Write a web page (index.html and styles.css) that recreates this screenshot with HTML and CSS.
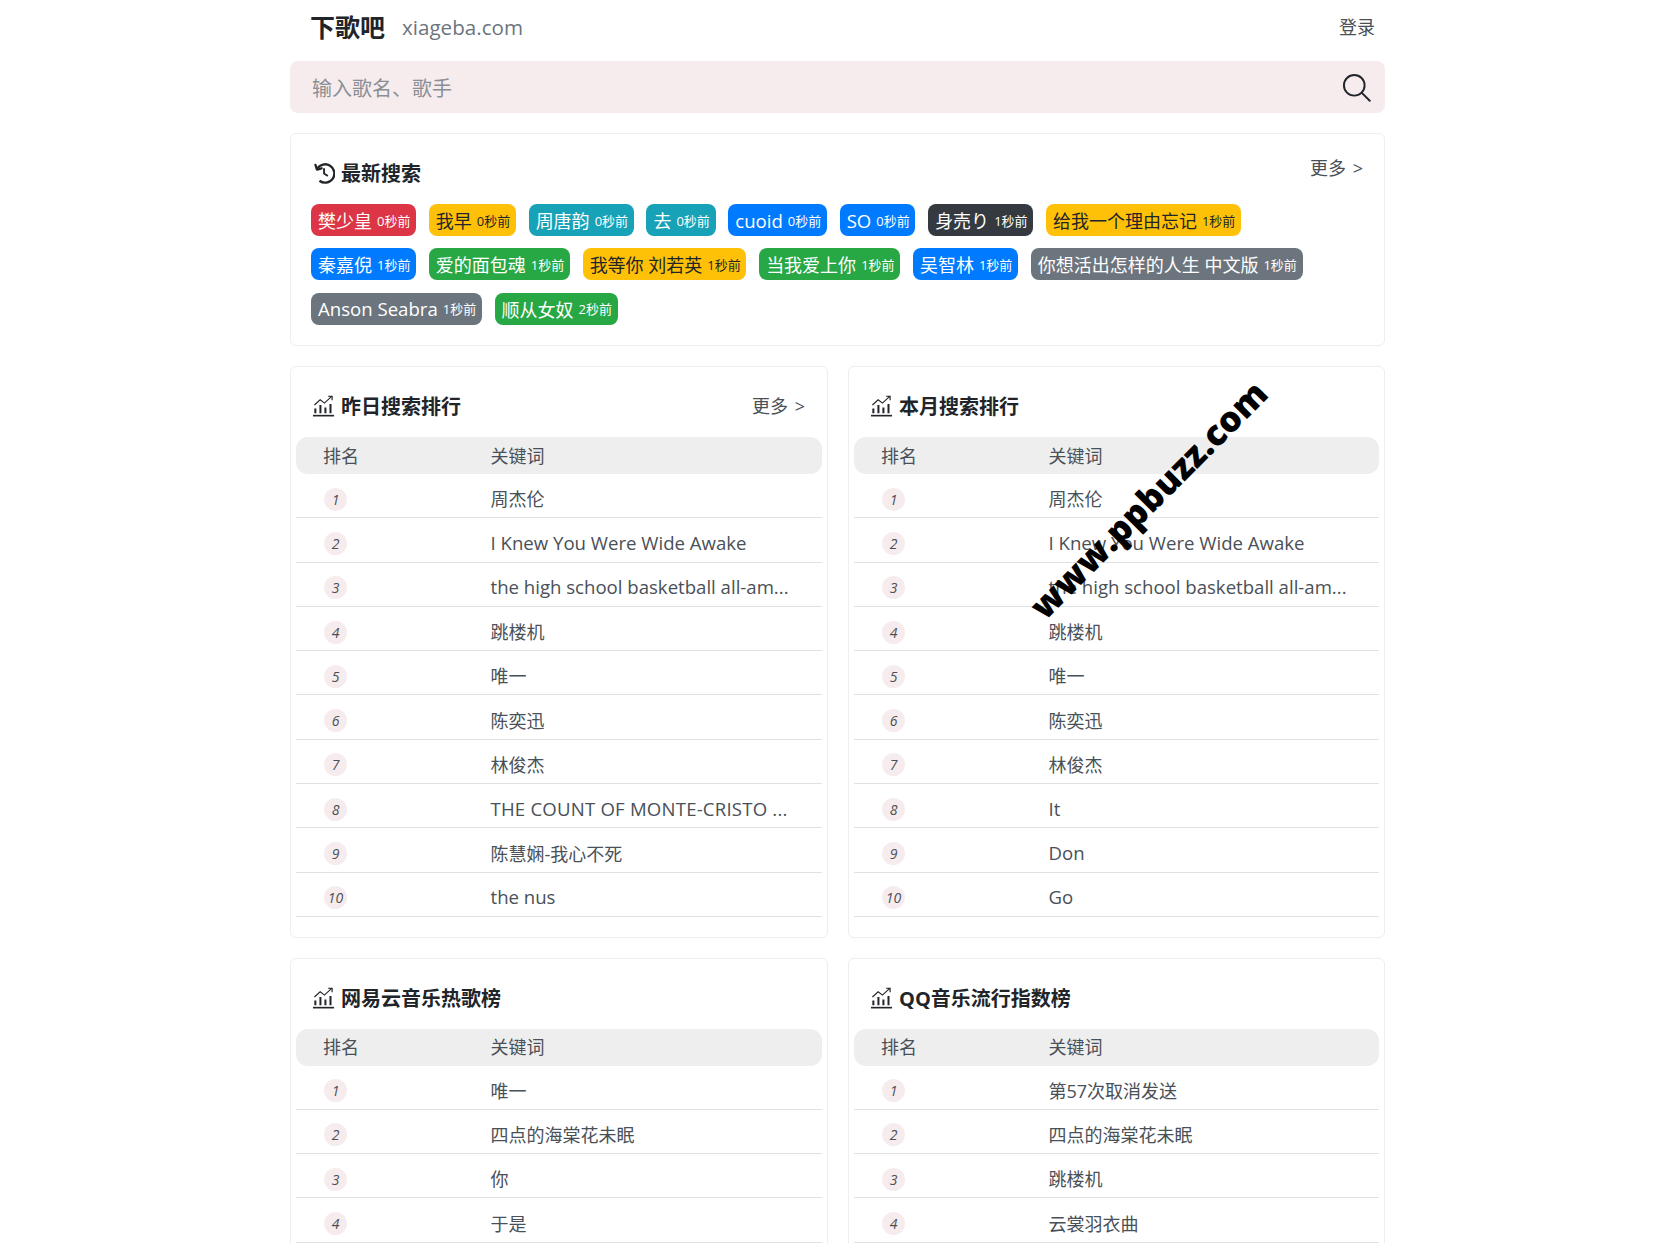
FILE: index.html
```html
<!DOCTYPE html>
<html lang="zh">
<head>
<meta charset="utf-8">
<title>下歌吧</title>
<link rel="stylesheet" href="styles.css">
</head>
<body>
<div class="page">
  <header class="topbar">
    <div class="brand"><strong>下歌吧</strong><span class="domain">xiageba.com</span></div>
    <a class="login">登录</a>
  </header>

  <div class="search">
    <span class="placeholder">输入歌名、歌手</span>
    <svg class="search-icon" viewBox="0 0 30 30" fill="none" stroke="#212529" stroke-width="2"><circle cx="12.7" cy="12.7" r="10.7"/><path d="M20.5 20.5 L28.7 28.7" stroke-linecap="round"/></svg>
  </div>

  <section class="card latest">
    <div class="card-head">
      <h2 class="title"><svg class="icon" viewBox="0 0 24 24" fill="none" stroke="#212529" stroke-width="2.4"><path d="M3.6 4 L5.2 9 L10 7.6" stroke-linecap="round" stroke-linejoin="round"/><path d="M5.4 8.2 A9.6 9.6 0 1 1 7.8 20.6"/><path d="M12.6 7.5 V13 L16.5 15.6" stroke-width="2"/></svg>最新搜索</h2>
      <a class="more">更多 &gt;</a>
    </div>
    <div class="tags">
      <a class="tag red">樊少皇<small>0秒前</small></a>
      <a class="tag yellow">我早<small>0秒前</small></a>
      <a class="tag teal">周唐韵<small>0秒前</small></a>
      <a class="tag teal">去<small>0秒前</small></a>
      <a class="tag blue"><span class="en">cuoid</span><small>0秒前</small></a>
      <a class="tag blue"><span class="en">SO</span><small>0秒前</small></a>
      <a class="tag dark">身売り<small>1秒前</small></a>
      <a class="tag yellow">给我一个理由忘记<small>1秒前</small></a>
    </div>
    <div class="tags">
      <a class="tag blue">秦嘉倪<small>1秒前</small></a>
      <a class="tag green">爱的面包魂<small>1秒前</small></a>
      <a class="tag yellow">我等你 刘若英<small>1秒前</small></a>
      <a class="tag green">当我爱上你<small>1秒前</small></a>
      <a class="tag blue">吴智林<small>1秒前</small></a>
      <a class="tag gray">你想活出怎样的人生 中文版<small>1秒前</small></a>
    </div>
    <div class="tags">
      <a class="tag gray"><span class="en">Anson Seabra</span><small>1秒前</small></a>
      <a class="tag green">顺从女奴<small>2秒前</small></a>
    </div>
  </section>

  <div class="panels">
    <section class="card panel">
      <div class="panel-head">
        <h2 class="title"><svg class="icon chart" viewBox="0 0 24 24" fill="none" stroke="#212529"><use href="#chart-lines"/></svg>昨日搜索排行</h2>
        <a class="more">更多 &gt;</a>
      </div>
      <div class="rank-row rank-head"><span>排名</span><span>关键词</span></div>
      <div class="rank-row"><i>1</i><span>周杰伦</span></div>
      <div class="rank-row"><i>2</i><span class="en">I Knew You Were Wide Awake</span></div>
      <div class="rank-row"><i>3</i><span class="en">the high school basketball all-am...</span></div>
      <div class="rank-row"><i>4</i><span>跳楼机</span></div>
      <div class="rank-row"><i>5</i><span>唯一</span></div>
      <div class="rank-row"><i>6</i><span>陈奕迅</span></div>
      <div class="rank-row"><i>7</i><span>林俊杰</span></div>
      <div class="rank-row"><i>8</i><span class="en caps">THE COUNT OF MONTE-CRISTO ...</span></div>
      <div class="rank-row"><i>9</i><span>陈慧娴-我心不死</span></div>
      <div class="rank-row"><i>10</i><span class="en">the nus</span></div>
    </section>

    <section class="card panel">
      <div class="panel-head">
        <h2 class="title"><svg class="icon chart" viewBox="0 0 24 24" fill="none" stroke="#212529"><use href="#chart-lines"/></svg>本月搜索排行</h2>
      </div>
      <div class="rank-row rank-head"><span>排名</span><span>关键词</span></div>
      <div class="rank-row"><i>1</i><span>周杰伦</span></div>
      <div class="rank-row"><i>2</i><span class="en">I Knew You Were Wide Awake</span></div>
      <div class="rank-row"><i>3</i><span class="en">the high school basketball all-am...</span></div>
      <div class="rank-row"><i>4</i><span>跳楼机</span></div>
      <div class="rank-row"><i>5</i><span>唯一</span></div>
      <div class="rank-row"><i>6</i><span>陈奕迅</span></div>
      <div class="rank-row"><i>7</i><span>林俊杰</span></div>
      <div class="rank-row"><i>8</i><span class="en">It</span></div>
      <div class="rank-row"><i>9</i><span class="en">Don</span></div>
      <div class="rank-row"><i>10</i><span class="en">Go</span></div>
    </section>

    <section class="card panel">
      <div class="panel-head">
        <h2 class="title"><svg class="icon chart" viewBox="0 0 24 24" fill="none" stroke="#212529"><use href="#chart-lines"/></svg>网易云音乐热歌榜</h2>
      </div>
      <div class="rank-row rank-head"><span>排名</span><span>关键词</span></div>
      <div class="rank-row"><i>1</i><span>唯一</span></div>
      <div class="rank-row"><i>2</i><span>四点的海棠花未眠</span></div>
      <div class="rank-row"><i>3</i><span>你</span></div>
      <div class="rank-row"><i>4</i><span>于是</span></div>
    </section>

    <section class="card panel">
      <div class="panel-head">
        <h2 class="title"><svg class="icon chart" viewBox="0 0 24 24" fill="none" stroke="#212529"><use href="#chart-lines"/></svg>QQ音乐流行指数榜</h2>
      </div>
      <div class="rank-row rank-head"><span>排名</span><span>关键词</span></div>
      <div class="rank-row"><i>1</i><span>第57次取消发送</span></div>
      <div class="rank-row"><i>2</i><span>四点的海棠花未眠</span></div>
      <div class="rank-row"><i>3</i><span>跳楼机</span></div>
      <div class="rank-row"><i>4</i><span>云裳羽衣曲</span></div>
    </section>
  </div>
</div>

<div class="watermark">www.ppbuzz.com</div>

<svg class="defs" width="0" height="0" aria-hidden="true">
  <defs>
    <g id="chart-lines">
      <path d="M1 22.6 H23" stroke-width="1.7"/>
      <path d="M3.5 20 V15 M8.8 20 V11.5 M14 20 V14 M19.3 20 V10.5" stroke-width="2.1"/>
      <path d="M2.5 11.5 L8.5 6 L13 9.5 L20.5 2.5 M16.8 2.3 H21 V6.5" stroke-width="1.2"/>
    </g>
  </defs>
</svg>
</body>
</html>
```
FILE: styles.css
```css
* { box-sizing: border-box; }
html, body { height: 100%; overflow: hidden; }
body {
  position: relative;
  margin: 0;
  background: #fff;
  color: #495057;
  font-family: "Open Sans", "Noto Sans CJK SC", sans-serif;
  font-size: 18px;
}
.page { width: 1095px; margin-left: 290px; }
.en { font-size: 18.6px; }
.caps { letter-spacing: 0.2px; }

.topbar {
  display: flex;
  align-items: center;
  justify-content: space-between;
  height: 61px;
  padding: 0 10px 10px 20px;
}
.brand { display: flex; align-items: center; }
.brand strong { font-size: 25px; color: #212529; }
.domain { margin-left: 17px; margin-top: 3px; font-size: 20.6px; color: #6c757d; }
.login { font-size: 18px; }

.search {
  display: flex;
  align-items: center;
  justify-content: space-between;
  height: 52px;
  padding: 0 14px 0 22px;
  border-radius: 8px;
  background: #f6ecee;
}
.placeholder { font-size: 20px; color: #8a8f94; }
.search-icon { width: 29px; height: 29px; }

.card {
  border: 1px solid #eee;
  border-radius: 6px;
  background: #fff;
}
.latest { margin-top: 20px; height: 213px; padding: 0 21px 0 20px; }
.card-head { display: flex; justify-content: space-between; height: 70px; padding-top: 20px; }
.card-head .more { line-height: 28px; }
.title {
  display: flex;
  align-items: center;
  gap: 6px;
  height: 37px;
  margin: 0;
  padding-left: 1px;
  font-size: 20px;
  font-weight: 700;
  color: #212529;
}
.icon { width: 23px; height: 23px; flex: none; }
.more { font-size: 18px; color: #495057; word-spacing: 2px; }

.tags { display: flex; gap: 12.7px; height: 44.4px; }
.tag {
  display: flex;
  align-items: center;
  height: 32px;
  padding: 0 5.7px 0 7px;
  border-radius: 8px;
  font-size: 18px;
  white-space: pre;
}
.tag small { margin-left: 5px; font-size: 13px; }
.red { background: #dc3545; color: #fff; }
.yellow { background: #ffc107; color: #212529; }
.teal { background: #17a2b8; color: #fff; }
.blue { background: #007bff; color: #fff; }
.dark { background: #343a40; color: #fff; }
.gray { background: #6c757d; color: #fff; }
.green { background: #28a745; color: #fff; }

.panels {
  display: grid;
  grid-template-columns: 538px 537px;
  gap: 20px 20px;
  margin-top: 20px;
}
.panel { height: 571.5px; padding: 0 5px; }
.panel-head {
  display: flex;
  justify-content: space-between;
  height: 70px;
  padding: 20px 17px 0 15px;
}
.panel-head .more { line-height: 38px; }

.rank-row {
  display: grid;
  grid-template-columns: 166.5px 1fr;
  align-items: center;
  height: 44.3px;
  padding-left: 28px;
  padding-top: 5px;
  border-bottom: 1px solid #dee2e6;
}
.rank-head {
  grid-template-columns: 167.5px 1fr;
  height: 37px;
  padding-top: 0;
  padding-bottom: 2px;
  padding-left: 27px;
  border: 0;
  border-radius: 12px;
  background: #eee;
}
.rank-row i {
  display: flex;
  align-items: center;
  justify-content: center;
  width: 23px;
  height: 23px;
  margin-top: 2px;
  border-radius: 50%;
  background: #f6ecee;
  font-size: 14px;
  font-style: italic;
  color: #495057;
}

.watermark {
  position: absolute;
  left: 1148px;
  top: 499px;
  transform: translate(-50%, -50%) rotate(-45deg);
  font-family: "Open Sans", sans-serif;
  font-size: 35px;
  font-weight: 800;
  line-height: 1;
  color: #000;
  white-space: nowrap;
}
.defs { position: absolute; }
```
